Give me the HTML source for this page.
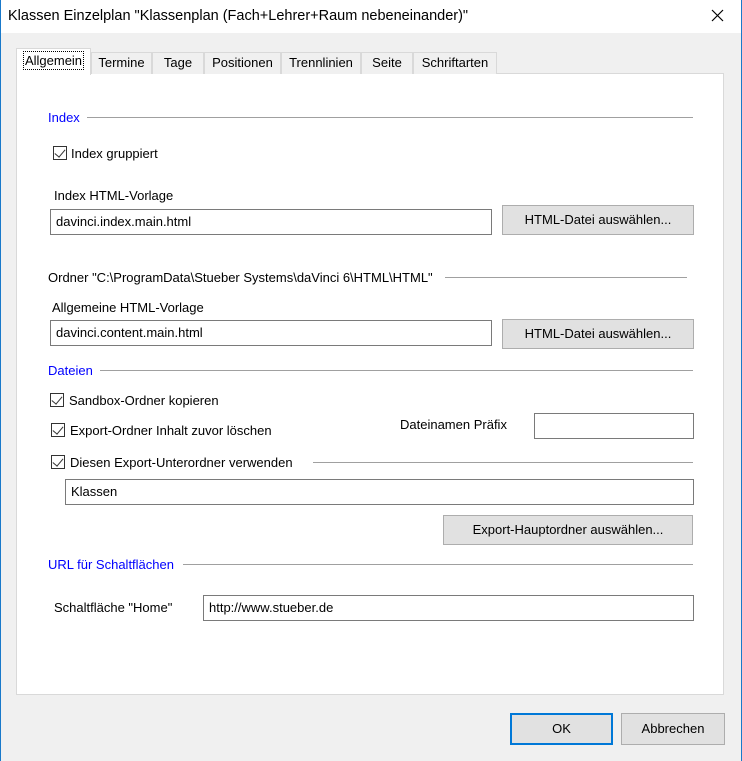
<!DOCTYPE html>
<html><head><style>
*{box-sizing:border-box;margin:0;padding:0}
body{width:742px;height:761px;background:#f0f0f0;font-family:"Liberation Sans",sans-serif;font-size:13px;color:#000;position:relative;overflow:hidden}
.a{position:absolute;white-space:nowrap}
.win{position:absolute;left:0;top:0;width:742px;height:761px;border-left:1px solid #1979ca;border-right:1px solid #1979ca}
.title{position:absolute;left:0;top:0;width:742px;height:33px;background:#fff}
.panel{position:absolute;left:16px;top:73px;width:708px;height:622px;background:#fff;border:1px solid #d9d9d9}
.tab{position:absolute;top:52px;height:22px;background:#f0f0f0;border:1px solid #d9d9d9;border-bottom:none;text-align:center;line-height:20px;font-size:13px}
.sel{top:48px;height:27px;background:#fff;z-index:2}
.sel span{border:1px dotted #000;padding:1px 1px}
.blue{color:#0000ff;font-size:13px}
.line{position:absolute;height:1px;background:#a0a0a0}
.inp{position:absolute;height:26px;border:1px solid #7a7a7a;background:#fff;padding-left:5px;line-height:24px;font-size:13px}
.btn{position:absolute;background:#e1e1e1;border:1px solid #adadad;text-align:center;font-size:13px}
.cb{position:absolute;width:14px;height:14px;border:1px solid #333;background:#fff}
.cb:after{content:"";position:absolute;left:3px;top:0px;width:5px;height:9px;border-right:1.5px solid #333;border-bottom:1.5px solid #333;transform:rotate(40deg)}
.t{font-size:13px}
</style></head><body>
<div class="title"></div>
<div class="a" style="left:8px;top:8px;font-size:14.5px">Klassen Einzelplan "Klassenplan (Fach+Lehrer+Raum nebeneinander)"</div>
<svg class="a" style="left:711px;top:9px" width="13" height="13"><path d="M1 1L12 12M12 1L1 12" stroke="#000" stroke-width="1.2"/></svg>
<div class="panel"></div>
<div class="tab sel" style="left:16px;width:75px;line-height:24px"><span>Allgemein</span></div>
<div class="tab" style="left:91px;width:61px">Termine</div>
<div class="tab" style="left:152px;width:52px">Tage</div>
<div class="tab" style="left:204px;width:77px">Positionen</div>
<div class="tab" style="left:281px;width:80px">Trennlinien</div>
<div class="tab" style="left:361px;width:52px">Seite</div>
<div class="tab" style="left:413px;width:84px">Schriftarten</div>

<div class="a blue" style="left:48px;top:110px">Index</div>
<div class="line" style="left:87px;top:117px;width:606px"></div>
<div class="cb" style="left:53px;top:146px"></div>
<div class="a t" style="left:71px;top:146px">Index gruppiert</div>
<div class="a t" style="left:54px;top:188px">Index HTML-Vorlage</div>
<div class="inp" style="left:50px;top:209px;width:442px">davinci.index.main.html</div>
<div class="btn" style="left:502px;top:205px;width:192px;height:30px;line-height:28px">HTML-Datei auswählen...</div>

<div class="a t" style="left:48px;top:270px">Ordner "C:\ProgramData\Stueber Systems\daVinci 6\HTML\HTML"</div>
<div class="line" style="left:445px;top:277px;width:242px"></div>
<div class="a t" style="left:52px;top:300px">Allgemeine HTML-Vorlage</div>
<div class="inp" style="left:50px;top:320px;width:442px">davinci.content.main.html</div>
<div class="btn" style="left:502px;top:319px;width:192px;height:30px;line-height:28px">HTML-Datei auswählen...</div>

<div class="a blue" style="left:48px;top:363px">Dateien</div>
<div class="line" style="left:100px;top:370px;width:593px"></div>
<div class="cb" style="left:50px;top:393px"></div>
<div class="a t" style="left:69px;top:393px">Sandbox-Ordner kopieren</div>
<div class="cb" style="left:51px;top:423px"></div>
<div class="a t" style="left:70px;top:423px">Export-Ordner Inhalt zuvor löschen</div>
<div class="a t" style="left:400px;top:417px">Dateinamen Präfix</div>
<div class="inp" style="left:534px;top:413px;width:160px"></div>
<div class="cb" style="left:51px;top:455px"></div>
<div class="a t" style="left:70px;top:455px">Diesen Export-Unterordner verwenden</div>
<div class="line" style="left:313px;top:462px;width:380px"></div>
<div class="inp" style="left:65px;top:479px;width:629px">Klassen</div>
<div class="btn" style="left:443px;top:515px;width:250px;height:30px;line-height:28px">Export-Hauptordner auswählen...</div>

<div class="a blue" style="left:48px;top:557px">URL für Schaltflächen</div>
<div class="line" style="left:183px;top:564px;width:510px"></div>
<div class="a t" style="left:54px;top:600px">Schaltfläche "Home"</div>
<div class="inp" style="left:203px;top:595px;width:491px">http://www.stueber.de</div>

<div class="btn" style="left:510px;top:713px;width:103px;height:32px;line-height:28px;border:2px solid #0078d7">OK</div>
<div class="btn" style="left:621px;top:713px;width:104px;height:32px;line-height:30px">Abbrechen</div>
<div class="win"></div>
</body></html>
